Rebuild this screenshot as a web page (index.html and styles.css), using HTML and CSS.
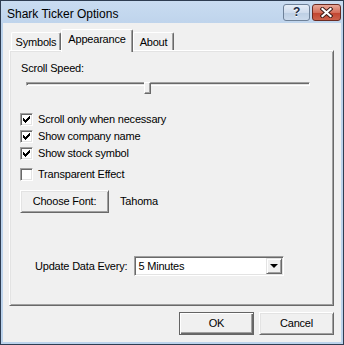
FILE: index.html
```html
<!DOCTYPE html>
<html lang="en">
<head>
    <meta charset="UTF-8">
    <title>Shark Ticker Options</title>
    <link rel="stylesheet" href="styles.css">
</head>
<body>
    <div class="window">
      <div class="titlebar">
        <span class="title">Shark Ticker Options</span>
        <div class="caption-buttons">
          <span class="cap-btn cap-help">?</span>
          <span class="cap-btn cap-close">
            <svg width="13" height="11" viewBox="0 0 13 11">
              <path d="M2.5 2 L10.5 9 M10.5 2 L2.5 9" stroke="#3a1a16" stroke-width="4" stroke-linecap="square"/>
              <path d="M2.5 2 L10.5 9 M10.5 2 L2.5 9" stroke="#ffffff" stroke-width="2.2" stroke-linecap="square"/>
            </svg>
          </span>
        </div>
      </div>

      <div class="client">
        <div class="tabs">
          <span class="tab tab-symbols">Symbols</span>
          <span class="tab tab-active">Appearance</span>
          <span class="tab tab-about">About</span>
        </div>

        <div class="panel">
          <div class="speed-label">Scroll Speed:</div>
          <div class="slider">
            <div class="slider-track"></div>
            <div class="slider-thumb"></div>
          </div>

          <ul class="options">
            <li class="option">
              <span class="checkbox"><svg width="11" height="11" viewBox="1 1 11 11"><path d="M9 3h1v1h-1z M8 4h2v1h-2z M3 5h1v1h-1z M7 5h3v1h-3z M3 6h2v1h-2z M6 6h3v1h-3z M3 7h5v1h-5z M4 8h3v1h-3z M5 9h1v1h-1z" fill="#000"/></svg></span>
              Scroll only when necessary
            </li>
            <li class="option">
              <span class="checkbox"><svg width="11" height="11" viewBox="1 1 11 11"><path d="M9 3h1v1h-1z M8 4h2v1h-2z M3 5h1v1h-1z M7 5h3v1h-3z M3 6h2v1h-2z M6 6h3v1h-3z M3 7h5v1h-5z M4 8h3v1h-3z M5 9h1v1h-1z" fill="#000"/></svg></span>
              Show company name
            </li>
            <li class="option">
              <span class="checkbox"><svg width="11" height="11" viewBox="1 1 11 11"><path d="M9 3h1v1h-1z M8 4h2v1h-2z M3 5h1v1h-1z M7 5h3v1h-3z M3 6h2v1h-2z M6 6h3v1h-3z M3 7h5v1h-5z M4 8h3v1h-3z M5 9h1v1h-1z" fill="#000"/></svg></span>
              Show stock symbol
            </li>
            <li class="option option-last">
              <span class="checkbox"></span>
              Transparent Effect
            </li>
          </ul>

          <div class="font-row">
            <span class="button button-font">Choose Font:</span>
            <span class="font-name">Tahoma</span>
          </div>

          <div class="update-row">
            <span class="update-label">Update Data Every:</span>
            <span class="combo">
              <span class="combo-text">5 Minutes</span>
              <span class="combo-button"><span class="combo-arrow"></span></span>
            </span>
          </div>
        </div>

        <div class="actions">
          <span class="button button-default">OK</span>
          <span class="button">Cancel</span>
        </div>
      </div>
    </div>
</body>
</html>
```

FILE: styles.css
```css
html,
body {
  margin: 0;
  padding: 0;
}

body {
  width: 344px;
  height: 345px;
  font-family: "Liberation Sans", Arial, sans-serif;
  font-size: 11px;
  line-height: 13px;
  letter-spacing: -0.2px;
  color: #000000;
}

.window {
  box-sizing: border-box;
  display: flex;
  flex-direction: column;
  width: 344px;
  height: 345px;

  background-color: #bcd3ec;
  border: 1px solid #2e3d52;
}

/* title bar */

.titlebar {
  display: flex;
  align-items: flex-start;
  justify-content: space-between;
  flex-shrink: 0;
  height: 22px;
  padding: 0 2px 0 6px;

  background: linear-gradient(#c9dcf1, #bfd4ec);
}

.title {
  margin-top: 6px;
  font-size: 12px;
  line-height: 14px;
  letter-spacing: 0;
}

.caption-buttons {
  display: flex;
  margin-top: 3px;
}

.cap-btn {
  box-sizing: border-box;
  display: flex;
  align-items: center;
  justify-content: center;
  height: 17px;
  border-radius: 3px;
}

.cap-help {
  width: 27px;
  margin-right: 2px;

  font-weight: bold;
  font-size: 12px;
  color: #1d2c44;
  text-shadow: 0 1px 0 #ffffff;

  background: linear-gradient(#e6eef8, #cfdced 50%, #bccee3 51%, #cbdaec);
  border: 1px solid #6e8198;
}

.cap-close {
  width: 29px;

  background: linear-gradient(#e9a898, #d46f5c 50%, #c1432f 51%, #cc624c);
  border: 1px solid #6b2b22;
}

.cap-close svg {
  display: block;
}

/* client area */

.client {
  display: flex;
  flex-direction: column;
  flex-grow: 1;
  margin: 0 2px 2px;
  padding: 6px 7px 7px 6px;

  background-color: #f0f0f0;
}

.tabs {
  display: flex;
  align-items: flex-end;
  flex-shrink: 0;
  height: 21px;
  padding-left: 2px;
}

.tab {
  box-sizing: border-box;
  height: 18px;
  padding-top: 3px;
  text-align: center;

  background-color: #f0f0f0;
  border: 1px solid #ffffff;
  border-right-color: #696969;
  border-bottom: none;
  border-radius: 2px 2px 0 0;
  box-shadow: inset -1px 0 0 #a0a0a0;
}

.tab-symbols {
  width: 50px;
}

.tab-about {
  width: 41px;
}

.tab-active {
  z-index: 1;
  width: 72px;
  height: 23px;
  margin-bottom: -2px;
}

.panel {
  flex-grow: 1;
  padding: 11px 10px 0;

  border: 1px solid #ffffff;
  border-right-color: #696969;
  border-bottom-color: #696969;
  box-shadow: inset 1px 1px 0 #e3e3e3, inset -1px -1px 0 #a0a0a0;
}

.speed-label {
  margin-left: 1px;
}

/* slider */

.slider {
  position: relative;
  width: 284px;
  height: 12px;
  margin: 7px 0 0 6px;
}

.slider-track {
  box-sizing: border-box;
  height: 4px;
  margin-top: 4px;

  background-color: #e3e3e3;
  border: 1px solid #a0a0a0;
  border-right-color: #ffffff;
  border-bottom-color: #ffffff;
  box-shadow: inset 1px 1px 0 #696969;
}

.slider-thumb {
  position: absolute;
  top: 0;
  left: 118px;

  box-sizing: border-box;
  width: 7px;
  height: 12px;

  background-color: #f0f0f0;
  border: 1px solid #ffffff;
  border-right-color: #696969;
  border-bottom-color: #696969;
  box-shadow: inset -1px -1px 0 #a0a0a0;
}

/* check boxes */

.options {
  margin: 17px 0 0;
  padding: 0;
  list-style: none;
}

.option {
  display: flex;
  align-items: center;
  height: 17px;
}

.option-last {
  margin-top: 4px;
}

.checkbox {
  box-sizing: border-box;
  display: block;
  flex-shrink: 0;
  width: 13px;
  height: 13px;
  margin-right: 5px;

  background-color: #ffffff;
  border: 1px solid #a0a0a0;
  border-right-color: #ffffff;
  border-bottom-color: #ffffff;
  box-shadow: inset 1px 1px 0 #696969, inset -1px -1px 0 #e3e3e3;
}

.checkbox svg {
  display: block;
}

/* buttons */

.button {
  box-sizing: border-box;
  display: flex;
  align-items: center;
  justify-content: center;
  width: 75px;
  height: 23px;

  background-color: #f0f0f0;
  border: 1px solid #ffffff;
  border-right-color: #696969;
  border-bottom-color: #696969;
  box-shadow: inset 1px 1px 0 #e3e3e3, inset -1px -1px 0 #a0a0a0;
}

.button-default {
  border-color: #646464;
  box-shadow: inset 1px 1px 0 #ffffff, inset -1px -1px 0 #696969, inset -2px -2px 0 #a0a0a0;
}

.font-row {
  display: flex;
  align-items: center;
  margin-top: 7px;
}

.button-font {
  width: 89px;
}

.font-name {
  margin-left: 11px;
}

/* combo */

.update-row {
  display: flex;
  align-items: center;
  margin: 43px 0 0 15px;
}

.update-label {
  margin-right: 7px;
}

.combo {
  box-sizing: border-box;
  display: flex;
  align-items: center;
  width: 150px;
  height: 20px;
  padding: 0 0 0 2px;

  background-color: #ffffff;
  border: 1px solid #a0a0a0;
  border-right-color: #ffffff;
  border-bottom-color: #ffffff;
  box-shadow: inset 1px 1px 0 #696969, inset -1px -1px 0 #e3e3e3;
}

.combo-text {
  flex-grow: 1;
  padding-left: 1px;
}

.combo-button {
  box-sizing: border-box;
  display: flex;
  align-items: center;
  justify-content: center;
  width: 16px;
  height: 16px;
  margin-right: 1px;

  background-color: #f0f0f0;
  border: 1px solid #e3e3e3;
  border-right-color: #696969;
  border-bottom-color: #696969;
  box-shadow: inset 1px 1px 0 #ffffff, inset -1px -1px 0 #a0a0a0;
}

.combo-arrow {
  width: 0;
  height: 0;
  border-left: 4px solid transparent;
  border-right: 4px solid transparent;
  border-top: 4px solid #000000;
}

/* dialog buttons */

.actions {
  display: flex;
  justify-content: flex-end;
  flex-shrink: 0;
  margin-top: 6px;
}

.actions .button + .button {
  margin-left: 5px;
}
```
